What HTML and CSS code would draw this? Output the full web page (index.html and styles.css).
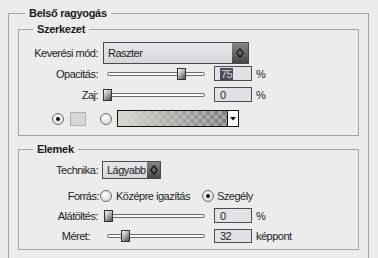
FILE: index.html
```html
<!DOCTYPE html>
<html lang="hu">
<head>
  <meta charset="UTF-8" />
  <meta name="viewport" content="width=device-width, initial-scale=1.0"/>
  <title>Belső ragyogás</title>
  <link rel="stylesheet" href="styles.css">
</head>
<body>
  <fieldset class="panel">
    <legend>Belső ragyogás</legend>

    <fieldset class="group structure">
      <legend>Szerkezet</legend>

      <div class="row row-mode">
        <label class="lbl">Keverési mód:</label>
        <div class="select select-mode">
          <span class="select-text">Raszter</span>
          <span class="select-btn">
            <svg width="8" height="10" viewBox="0 0 8 10"><path d="M4 0.8 L7.2 5 L4 9.2 L0.8 5 Z" fill="none" stroke="#111" stroke-width="1.2"/></svg>
          </span>
        </div>
      </div>

      <div class="row row-opacity">
        <label class="lbl">Opacitás:</label>
        <div class="slider"><span class="thumb" style="left: 74px"></span></div>
        <div class="num"><span class="num-sel">75</span></div>
        <span class="unit">%</span>
      </div>

      <div class="row row-noise">
        <label class="lbl">Zaj:</label>
        <div class="slider"><span class="thumb" style="left: 0px"></span></div>
        <div class="num">0</div>
        <span class="unit">%</span>
      </div>

      <div class="row row-color">
        <span class="radio checked"></span>
        <span class="swatch"></span>
        <span class="radio radio-grad"></span>
        <div class="gradient">
          <span class="gradient-fill"></span>
          <span class="gradient-btn">
            <svg width="6" height="4" viewBox="0 0 6 4"><path d="M0 0 H6 L3 3.5 Z" fill="#111"/></svg>
          </span>
        </div>
      </div>
    </fieldset>

    <fieldset class="group elements">
      <legend>Elemek</legend>

      <div class="row row-tech">
        <label class="lbl lbl-tech">Technika:</label>
        <div class="select select-tech">
          <span class="select-text">Lágyabb</span>
          <span class="select-btn">
            <svg width="8" height="10" viewBox="0 0 8 10"><path d="M4 0.8 L7.2 5 L4 9.2 L0.8 5 Z" fill="none" stroke="#111" stroke-width="1.2"/></svg>
          </span>
        </div>
      </div>

      <div class="row row-source">
        <label class="lbl lbl-source">Forrás:</label>
        <span class="radio"></span>
        <span class="opt opt-center">Középre igazítás</span>
        <span class="radio checked"></span>
        <span class="opt opt-edge">Szegély</span>
      </div>

      <div class="row row-choke">
        <label class="lbl">Alátöltés:</label>
        <div class="slider"><span class="thumb" style="left: 1px"></span></div>
        <div class="num">0</div>
        <span class="unit">%</span>
      </div>

      <div class="row row-size">
        <label class="lbl lbl-size">Méret:</label>
        <div class="slider"><span class="thumb" style="left: 18px"></span></div>
        <div class="num">32</div>
        <span class="unit">képpont</span>
      </div>
    </fieldset>
  </fieldset>
</body>
</html>
```

FILE: styles.css
```css
body {
  margin: 0;
  background: #ececec;
  font-family: 'Liberation Sans', Arial, sans-serif;
  font-size: 11px;
  letter-spacing: -0.5px;
  color: #1c1c1c;
  overflow: hidden;
}
fieldset {
  margin: 0;
  min-width: 0;
  border: 1px solid #a2a2a2;
}
legend {
  font-weight: bold;
  font-size: 11px;
  line-height: 13px;
  letter-spacing: -0.3px;
  padding: 0 4px;
  color: #1a1a1a;
}
.panel {
  margin: 7px 9px 0 8px;
  padding: 3px 9px 40px 9px;
}
.panel > legend {
  margin-left: 7px;
}
.group {
  padding: 0;
}
.group > legend {
  margin-left: 14px;
}
.structure {
  padding-top: 6px;
  padding-bottom: 8px;
}
.elements {
  margin-top: 7px;
  padding-top: 5px;
  padding-bottom: 6px;
}

.row {
  display: flex;
  align-items: center;
}
.lbl {
  width: 79px;
  margin-right: 5px;
  text-align: right;
  white-space: nowrap;
}
.lbl-tech { margin-right: 4px; }
.lbl-size { width: 71px; margin-right: 13px; }
.lbl-source { width: 80px; margin-right: 1px; }

.row-mode { height: 22px; }
.row-opacity { height: 15px; margin-top: 2px; }
.row-noise { height: 15px; margin-top: 6px; }
.row-color { height: 17px; margin-top: 8px; }
.row-tech { height: 18px; }
.row-source { height: 14px; margin-top: 10px; }
.row-choke { height: 15px; margin-top: 5px; }
.row-size { height: 14px; margin-top: 6px; }

/* dropdowns */
.select {
  display: flex;
  height: 100%;
  box-sizing: border-box;
  border: 1px solid #4a4a4a;
  background: linear-gradient(#e6e6ec, #d6d6dc);
}
.select-mode { width: 146px; }
.select-tech { width: 59px; }
.select-text {
  flex: 1;
  padding-left: 4px;
  display: flex;
  align-items: center;
}
.select-btn {
  width: 16px;
  display: flex;
  align-items: center;
  justify-content: center;
  background: linear-gradient(#858585, #474747);
}
.select-tech .select-btn { width: 13px; }

/* sliders */
.slider {
  position: relative;
  width: 104px;
  height: 12px;
}
.slider::before {
  content: '';
  position: absolute;
  left: 4px;
  right: 2px;
  top: 4px;
  height: 4px;
  box-sizing: border-box;
  border: 1px solid #6c6c6c;
  border-radius: 3px;
  background: #fbfbfb;
}
.thumb {
  position: absolute;
  top: 0;
  width: 9px;
  height: 12px;
  box-sizing: border-box;
  border: 1px solid #333;
  background: linear-gradient(135deg, #fafafa 0%, #b4b4b4 45%, #4c4c4c 100%);
}

/* number fields */
.num {
  width: 38px;
  height: 100%;
  margin-left: 7px;
  box-sizing: border-box;
  border: 1px solid #4c4c4c;
  background: #e1e2e7;
  padding-left: 5px;
  display: flex;
  align-items: center;
}
.num-sel {
  background: #474b5c;
  color: #d8dae4;
  padding: 0 1px;
  line-height: 12px;
}
.unit {
  margin-left: 4px;
}

/* radios */
.radio {
  width: 12px;
  height: 12px;
  box-sizing: border-box;
  border: 1px solid #6a6a6a;
  border-radius: 50%;
  background: radial-gradient(circle at 40% 35%, #fdfdfd, #d2d2d2);
  display: flex;
  align-items: center;
  justify-content: center;
  flex: none;
}
.radio.checked::after {
  content: '';
  width: 4px;
  height: 4px;
  border-radius: 50%;
  background: #111;
}
.row-color .radio:first-child { margin-left: 33px; }
.swatch {
  width: 16px;
  height: 14px;
  margin-left: 6px;
  box-sizing: border-box;
  border: 1px solid #b0b0ac;
  background: #d8d8d0;
}
.radio-grad { margin-left: 14px; }
.gradient {
  display: flex;
  width: 122px;
  height: 17px;
  margin-left: 5px;
  box-sizing: border-box;
  border: 1px solid #111;
}
.gradient-fill {
  flex: 1;
  background:
    linear-gradient(to right, #d6d6ce 5%, rgba(214, 214, 206, 0) 100%),
    conic-gradient(#a4a4a4 25%, #7c7c7c 0 50%, #a4a4a4 0 75%, #7c7c7c 0);
  background-size: auto, 8px 8px;
}
.gradient-btn {
  width: 10px;
  border-left: 1px solid #111;
  background: #fafafa;
  display: flex;
  align-items: center;
  justify-content: center;
}

.opt { white-space: nowrap; }
.opt-center { width: 90px; padding-left: 4px; box-sizing: border-box; flex: none; }
.opt-edge { margin-left: 3px; }
```
